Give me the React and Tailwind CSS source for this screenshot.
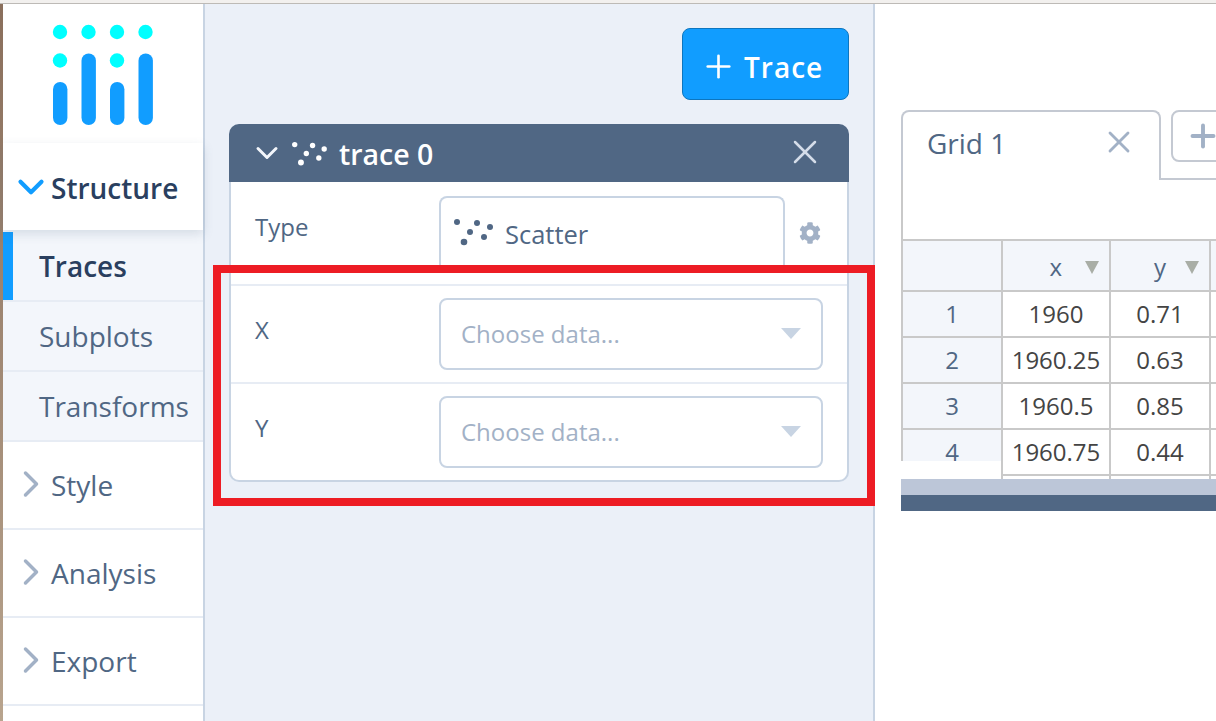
import React from 'react';
import { ChevronDown, ChevronRight, X, Plus } from 'lucide-react';

const font = { fontFamily: '"Open Sans", sans-serif' };

const Logo = () => (
  <svg width="102" height="102" viewBox="0 0 102 102">
    {[8, 36.5, 65, 93.5].map((x) => (
      <circle key={x} cx={x} cy="8" r="7.2" fill="#00ffff" />
    ))}
    <circle cx="8" cy="36.5" r="7.2" fill="#00ffff" />
    <circle cx="65" cy="36.5" r="7.2" fill="#00ffff" />
    <rect x="1" y="58" width="14.4" height="43" rx="7.2" fill="#119dff" />
    <rect x="29.5" y="29.5" width="14.4" height="71.5" rx="7.2" fill="#119dff" />
    <rect x="58" y="58" width="14.4" height="43" rx="7.2" fill="#119dff" />
    <rect x="86.5" y="29.5" width="14.4" height="71.5" rx="7.2" fill="#119dff" />
  </svg>
);

const ScatterIcon = ({ color, width = 40, height = 28 }) => (
  <svg width={width} height={height} viewBox="0 0 40 28" fill={color}>
    <circle cx="4" cy="4" r="3" />
    <circle cx="24" cy="5" r="3" />
    <circle cx="37" cy="9" r="3" />
    <circle cx="17" cy="14" r="3" />
    <circle cx="31" cy="19" r="3" />
    <circle cx="11" cy="24" r="3.3" />
  </svg>
);

const Gear = () => (
  <svg width="22" height="22" viewBox="0 0 512 512" fill="#a2b1c6">
    <path d="M487.4 315.7l-42.6-24.6c4.3-23.2 4.3-47 0-70.2l42.6-24.6c4.9-2.8 7.1-8.6 5.5-14-11.1-35.6-30-67.8-54.7-94.6-3.8-4.1-10-5.1-14.8-2.3L380.8 110c-17.9-15.4-38.5-27.3-60.8-35.1V25.8c0-5.6-3.9-10.5-9.4-11.7-36.7-8.2-74.3-7.8-109.2 0-5.5 1.2-9.4 6.1-9.4 11.7V75c-22.2 7.9-42.8 19.8-60.8 35.1L88.7 85.5c-4.9-2.8-11-1.9-14.8 2.3-24.7 26.7-43.6 58.9-54.7 94.6-1.7 5.4.6 11.2 5.5 14L67.3 221c-4.3 23.2-4.3 47 0 70.2l-42.6 24.6c-4.9 2.8-7.1 8.6-5.5 14 11.1 35.6 30 67.8 54.7 94.6 3.8 4.1 10 5.1 14.8 2.3l42.6-24.6c17.9 15.4 38.5 27.3 60.8 35.1v49.2c0 5.6 3.9 10.5 9.4 11.7 36.7 8.2 74.3 7.8 109.2 0 5.5-1.2 9.4-6.1 9.4-11.7v-49.2c22.2-7.9 42.8-19.8 60.8-35.1l42.6 24.6c4.9 2.8 11 1.9 14.8-2.3 24.7-26.7 43.6-58.9 54.7-94.6 1.5-5.5-.7-11.3-5.6-14.1zM256 336c-44.1 0-80-35.9-80-80s35.9-80 80-80 80 35.9 80 80-35.9 80-80 80z" />
  </svg>
);

const SubItem = ({ label, active }) => (
  <div className={`relative h-[70px] pl-[36px] pt-[16px] border-b-2 border-[#e7ecf4] bg-[#f3f6fb] text-[28px] leading-[36px] ${active ? 'font-semibold text-[#2a3f5f]' : 'text-[#506784]'}`}>
    {active && <div className="absolute left-0 top-0 bottom-0 w-[10px] bg-[#119dff]" />}
    {label}
  </div>
);

const Section = ({ label }) => (
  <div className="h-[88px] flex items-start border-b-2 border-[#e7ecf4] bg-white text-[#506784] text-[28px] leading-[36px]">
    <ChevronRight size={44} strokeWidth={1.9} className="ml-[6px] mt-[20px] text-[#a2b1c6]" />
    <span className="-ml-[2px] mt-[25px]">{label}</span>
  </div>
);

const Sidebar = () => (
  <div className="w-[202px] shrink-0 border-r-2 border-[#c8d4e3] bg-white h-full flex flex-col">
    <div className="h-[139px] shrink-0 pt-[20px] pl-[49px]">
      <Logo />
    </div>
    <div className="relative z-10 h-[87px] shrink-0 flex items-center pt-[3px] bg-white shadow-[0_4px_10px_rgba(80,103,132,0.18)] text-[28px] font-semibold text-[#2a3f5f]">
      <ChevronDown size={42} strokeWidth={2.4} className="ml-[7px] -mt-[2px] text-[#119dff]" />
      <span className="-ml-[1px]">Structure</span>
    </div>
    <div className="h-[2px] shrink-0 bg-[#f3f6fb]" />
    <SubItem label="Traces" active />
    <SubItem label="Subplots" />
    <SubItem label="Transforms" />
    <Section label="Style" />
    <Section label="Analysis" />
    <Section label="Export" />
  </div>
);

const Dropdown = () => (
  <div className="w-[384px] h-[72px] border-2 border-[#c8d4e3] rounded-[8px] flex items-center justify-between pl-[20px] pr-[20px] text-[#a2b1c6] text-[24px]">
    <span>Choose data...</span>
    <div className="w-0 h-0 border-l-[10px] border-r-[10px] border-t-[11px] border-l-transparent border-r-transparent border-t-[#c8d4e3] mb-[1px]" />
  </div>
);

const Row = ({ label, last }) => (
  <div className={`flex pl-[24px] pt-[12px] ${last ? 'h-[96px]' : 'h-[98px] border-b-2 border-[#e7ecf4]'}`}>
    <div className="w-[184px] pt-[16px] text-[24px] leading-[32px] text-[#506784]">{label}</div>
    <Dropdown />
  </div>
);

const TraceCard = () => (
  <div className="ml-[24px] w-[620px] mt-[24px]">
    <div className="h-[58px] rounded-t-[10px] bg-[#506784] flex items-center text-white">
      <ChevronDown size={36} strokeWidth={2} className="ml-[20px] text-[#f3f6fb]" />
      <div className="ml-[6px]">
        <ScatterIcon color="#ffffff" width={36} height={25} />
      </div>
      <span className="ml-[12px] mt-[3px] text-[28.5px] font-semibold">trace 0</span>
      <X size={40} strokeWidth={1.5} className="ml-auto mr-[24px] -mt-[2px] text-[#d5dde9]" />
    </div>
    <div className="border-x-2 border-b-2 border-[#c8d4e3] rounded-b-[10px] bg-white">
      <div className="h-[104px] flex pl-[24px] pt-[14px] border-b-2 border-[#e7ecf4]">
        <div className="w-[184px] pt-[15px] text-[24px] leading-[32px] text-[#506784]">Type</div>
        <div className="w-[346px] h-[70px] border-2 border-b-0 border-[#c8d4e3] rounded-t-[8px] flex items-start pl-[12px] pt-[20px]">
          <ScatterIcon color="#506784" />
          <span className="ml-[12px] -mt-[1px] text-[25.5px] leading-[34px] text-[#506784]">Scatter</span>
        </div>
        <div className="ml-[14px] mt-[26px]">
          <Gear />
        </div>
      </div>
      <Row label="X" />
      <Row label="Y" last />
    </div>
  </div>
);

const data = [
  ['1', '1960', '0.71'],
  ['2', '1960.25', '0.63'],
  ['3', '1960.5', '0.85'],
  ['4', '1960.75', '0.44'],
  ['', '', ''],
];

const HeadCell = ({ label, width, gap }) => (
  <div className={`${width} shrink-0 border-r-2 border-[#c9c9c9] flex items-center justify-end pr-[10px] text-[#506784] text-[24px]`}>
    <span className={`${gap} mt-[2px]`}>{label}</span>
    <div className="w-0 h-0 mt-[3px] border-l-[7px] border-r-[7px] border-t-[13px] border-l-transparent border-r-transparent border-t-[#a9aea6]" />
  </div>
);

const Grid = () => (
  <div className="flex-1 min-w-0 overflow-hidden bg-white pt-[106px] pl-[26px]">
    <div className="flex w-[400px] h-[70px]">
      <div className="w-[260px] h-[70px] shrink-0 border-2 border-b-0 border-[#c4c9d2] rounded-t-[8px] flex items-start pl-[24px] pr-[22px] pt-[13px] text-[#506784] text-[28px] leading-[36px]">
        <span>Grid 1</span>
        <X size={36} strokeWidth={1.9} className="ml-auto -mt-[1px] text-[#a2b1c6]" />
      </div>
      <div className="flex-1 border-b-2 border-[#c4c9d2] pl-[10px]">
        <div className="w-[80px] h-[52px] border-2 border-[#c4c9d2] rounded-[8px] flex items-center pl-[12px]">
          <Plus size={36} strokeWidth={2.6} className="text-[#a2b1c6]" />
        </div>
      </div>
    </div>
    <div className="h-[59px] w-[400px] border-l-2 border-[#c9c9c9]" />
    <div className="relative w-[400px] h-[272px] overflow-hidden">
      <div className="flex h-[53px] border-y-2 border-l-2 border-[#c9c9c9] bg-[#f3f6fb]">
        <div className="w-[100px] shrink-0 border-r-2 border-[#c9c9c9]" />
        <HeadCell label="x" width="w-[108px]" gap="mr-[23px]" />
        <HeadCell label="y" width="w-[100px]" gap="mr-[19px]" />
      </div>
      {data.map(([n, x, y], i) => (
        <div key={i} className="flex h-[46px] border-l-2 border-b-2 border-[#c9c9c9] text-[24px] leading-[44px] text-center text-[#444]">
          <div className="w-[100px] shrink-0 bg-[#f3f6fb] text-[#506784] border-r-2 border-[#c9c9c9]">{n}</div>
          <div className="w-[108px] shrink-0 border-r-2 border-[#c9c9c9]">{x}</div>
          <div className="w-[100px] shrink-0 border-r-2 border-[#c9c9c9]">{y}</div>
        </div>
      ))}
      {/* bottom of the fixed first column is cut off by white */}
      <div className="absolute left-0 top-[222px] w-[100px] h-[18px] bg-white" />
      <div className="absolute left-0 right-0 top-[240px] h-[16px] bg-[#bcc6d8]" />
      <div className="absolute left-0 right-0 top-[256px] h-[16px] bg-[#506784]" />
    </div>
  </div>
);

export default function App() {
  return (
    <div style={font} className="relative w-[1216px] h-[721px] overflow-hidden bg-white">
      <div className="h-[4px] bg-[#f2f0ee] border-b border-[#bdbab6]" />
      <div className="flex h-[717px]">
        <div className="w-[3px] shrink-0 bg-gradient-to-b from-[#8a6f5c] to-[#b8a48e]" />
        <Sidebar />
        <div className="w-[670px] shrink-0 bg-[#ebf0f8] border-r-2 border-[#c8d4e3] h-full">
          <div className="pt-[24px] pl-[477px]">
            <div className="w-[167px] h-[72px] rounded-[8px] bg-[#119dff] border border-[#0d76bf] flex items-center pl-[17px] pt-[5px] text-white text-[28px] font-semibold tracking-[1px]">
              <Plus size={37} strokeWidth={1.7} />
              <span className="ml-[7px]">Trace</span>
            </div>
          </div>
          <TraceCard />
        </div>
        <Grid />
      </div>
      <div className="absolute left-[213px] top-[265px] w-[662px] h-[241px] border-[8px] border-[#ed1c24]" />
    </div>
  );
}
